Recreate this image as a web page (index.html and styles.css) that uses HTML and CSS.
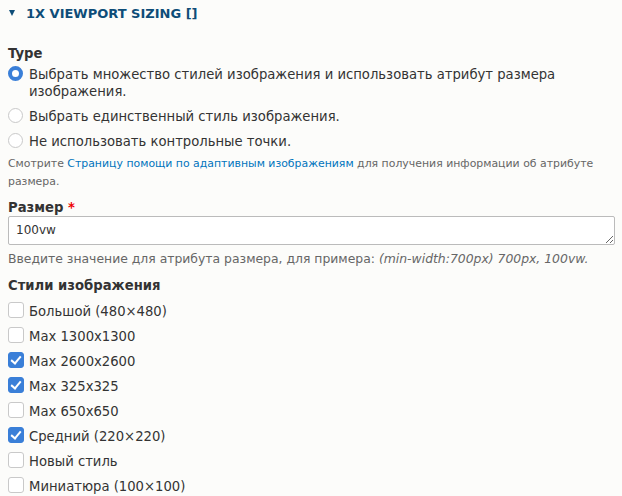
FILE: index.html
```html
<!DOCTYPE html>
<html>
<head>
<meta charset="utf-8">
<link rel="stylesheet" href="styles.css">
</head>
<body>
<div class="page">
  <div class="summary"><span class="tri"></span><span class="summary-title">1X VIEWPORT SIZING []</span></div>

  <div class="field field-type">
    <div class="label label-type">Type</div>
    <label class="radio-row"><input type="radio" name="t" checked><span>Выбрать множество стилей изображения и использовать атрибут размера изображения.</span></label>
    <label class="radio-row"><input type="radio" name="t"><span>Выбрать единственный стиль изображения.</span></label>
    <label class="radio-row radio-last"><input type="radio" name="t"><span>Не использовать контрольные точки.</span></label>
    <div class="desc">Смотрите <a href="#">Страницу помощи по адаптивным изображениям</a> для получения информации об атрибуте размера.</div>
  </div>

  <div class="field field-size">
    <div class="label label-size">Размер <span class="req">*</span></div>
    <textarea class="ta" rows="1">100vw</textarea>
    <div class="desc desc-big">Введите значение для атрибута размера, для примера: <em>(min-width:700px) 700px, 100vw.</em></div>
  </div>

  <div class="field field-styles">
    <div class="label label-styles">Стили изображения</div>
    <label class="check-row"><input type="checkbox"><span>Большой (480×480)</span></label>
    <label class="check-row"><input type="checkbox"><span>Max 1300x1300</span></label>
    <label class="check-row"><input type="checkbox" checked><span>Max 2600x2600</span></label>
    <label class="check-row"><input type="checkbox" checked><span>Max 325x325</span></label>
    <label class="check-row"><input type="checkbox"><span>Max 650x650</span></label>
    <label class="check-row"><input type="checkbox" checked><span>Средний (220×220)</span></label>
    <label class="check-row"><input type="checkbox"><span>Новый стиль</span></label>
    <label class="check-row"><input type="checkbox"><span>Миниатюра (100×100)</span></label>
  </div>
</div>
</body>
</html>
```

FILE: styles.css
```css
html, body {
  margin: 0;
  padding: 0;
  background: #fcfcfa;
}
body {
  font-family: "DejaVu Sans", sans-serif;
  font-size: 13.2px;
  color: #333;
}
.page {
  padding: 4px 7px 0 8px;
}
.summary {
  display: flex;
  align-items: center;
  height: 18px;
}
.tri {
  width: 0;
  height: 0;
  border-left: 3.5px solid transparent;
  border-right: 3.5px solid transparent;
  border-top: 6px solid #0e4d78;
  margin-left: 1px;
  margin-right: 11px;
}
.summary-title {
  font-weight: bold;
  color: #0e4d78;
  font-size: 13px;
}
.field {
  display: flex;
  flex-direction: column;
}
.field-type {
  margin-top: 23px;
}
.field-size {
  margin-top: 8px;
}
.field-styles {
  margin-top: 9px;
}
.label {
  font-weight: bold;
  line-height: 18px;
}
.label-type {
  margin-bottom: 3px;
}
.label-size {
  margin-bottom: -1px;
}
.label-styles {
  margin-bottom: 4px;
}
.req {
  color: #e00;
}
.radio-row {
  display: flex;
  align-items: flex-start;
  line-height: 17px;
  margin-bottom: 8px;
}
.radio-row.radio-last {
  margin-bottom: 5px;
}
.radio-row input {
  appearance: none;
  -webkit-appearance: none;
  width: 15px;
  height: 15px;
  margin: 0 6px 0 0;
  border: 1px solid #c9c9c9;
  border-radius: 50%;
  background: #fff;
  flex-shrink: 0;
  box-sizing: border-box;
}
.radio-row input:checked {
  border: 4px solid #3a7fd8;
}
.desc {
  font-size: 10.9px;
  color: #666;
  line-height: 18px;
}
.desc-big {
  font-size: 12.4px;
}
.desc a {
  color: #0074bd;
  text-decoration: none;
}
.ta {
  display: block;
  width: 100%;
  box-sizing: border-box;
  height: 29px;
  font-family: "DejaVu Sans", sans-serif;
  font-size: 12px;
  color: #333;
  padding: 6px 7px 4px;
  border: 1px solid #bbb;
  border-radius: 2px;
  background: #fff;
  margin-bottom: 5px;
  resize: vertical;
}
.desc em {
  font-style: italic;
}
.check-row {
  display: flex;
  align-items: center;
  height: 25px;
}
.check-row input {
  appearance: none;
  -webkit-appearance: none;
  width: 16px;
  height: 16px;
  margin: -3px 5px 0 0;
  border: 1px solid #c9c9c9;
  border-radius: 3px;
  background: #fff;
  box-sizing: border-box;
  position: relative;
}
.check-row input:checked {
  background: #3a7fd8;
  border-color: #3a7fd8;
}
.check-row input:checked::after {
  content: "";
  position: absolute;
  left: 4px;
  top: 1px;
  width: 4px;
  height: 8px;
  border: solid #fff;
  border-width: 0 2.5px 2.5px 0;
  transform: rotate(40deg);
}
```
